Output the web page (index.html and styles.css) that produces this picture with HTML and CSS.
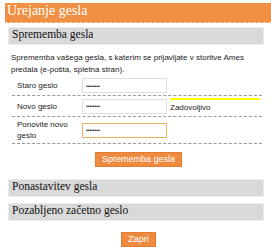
FILE: index.html
```html
<!doctype html>
<html>
<head>
	<meta charset="utf-8">
	<link rel="stylesheet" href="styles.css">
</head>
<body>

	<div class="dialog">
		<h1 class="title">Urejanje gesla</h1>

		<h2 class="section">Sprememba gesla</h2>
		<p class="intro">Sprememba vašega gesla, s katerim se prijavljate v storitve Ames predala (e-pošta, spletna stran).</p>

		<div class="row">
			<label class="label">Staro geslo</label>
			<input class="field" type="password" value="********">
		</div>
		<div class="row">
			<label class="label">Novo geslo</label>
			<input class="field" type="password" value="********">
			<div class="strength">
				<div class="strength-bar"></div>
				<span class="strength-text">Zadovoljivo</span>
			</div>
		</div>
		<div class="row">
			<label class="label">Ponovite novo geslo</label>
			<input class="field focus" type="password" value="********">
		</div>

		<div class="actions"><button class="btn">Sprememba gesla</button></div>

		<h2 class="section">Ponastavitev gesla</h2>
		<h2 class="section second">Pozabljeno začetno geslo</h2>

		<div class="actions close"><button class="btn">Zapri</button></div>
	</div>

</body>
</html>
```

FILE: styles.css
```css
body { margin: 0;background: #fff;font-family: "Liberation Sans", Arial, sans-serif;color: #222; }
.dialog { padding: 3px 0 0 5px; }
.title { margin: 0;height: 19px;line-height: 19px;background: #ef9044;color: #fff;font: normal 14px "Liberation Serif", serif;padding-left: 2px;border-bottom: 1px dashed #f9d3b0; }
.section { margin: 4px 7px 0 3px;height: 16px;line-height: 16px;background: #d9d9d9;border: 1px solid #ececec;font: normal 11.5px "Liberation Serif", serif;color: #111;padding-left: 3px; }
.section.second { margin-top: 6px; }
.intro { margin: 7px 10px 0 6px;font-size: 8px;line-height: 12px; }
.row { display: flex;align-items: center;margin: 0 9px 0 7px;padding: 2px 0 2px 5px;border-bottom: 1px dashed #999; }
.label { width: 65px;font-size: 8px;line-height: 11px; }
.field { width: 85px;height: 15px;box-sizing: border-box;margin: 0;padding: 0 3px;border: 1px solid #ddd;font-size: 5px;color: #000; }
.field.focus { border-color: #f3b060; }
.strength { display: flex;flex-direction: column;margin-left: 3px;flex: 1;align-self: flex-start; }
.strength-bar { height: 2px;background: #ffff00;margin-right: 2px; }
.strength-text { font-size: 8px;line-height: 12px;margin-top: 2px; }
.actions { display: flex;justify-content: center;padding: 8px 0 8px; }
.btn { background: #ef8b40;color: #fff;border: 1px solid #e37c34;font-size: 9px;height: 15px;line-height: 13px;padding: 0 6px;font-family: inherit;margin-left: 1px; }
.close { padding-top: 11px; }
```
